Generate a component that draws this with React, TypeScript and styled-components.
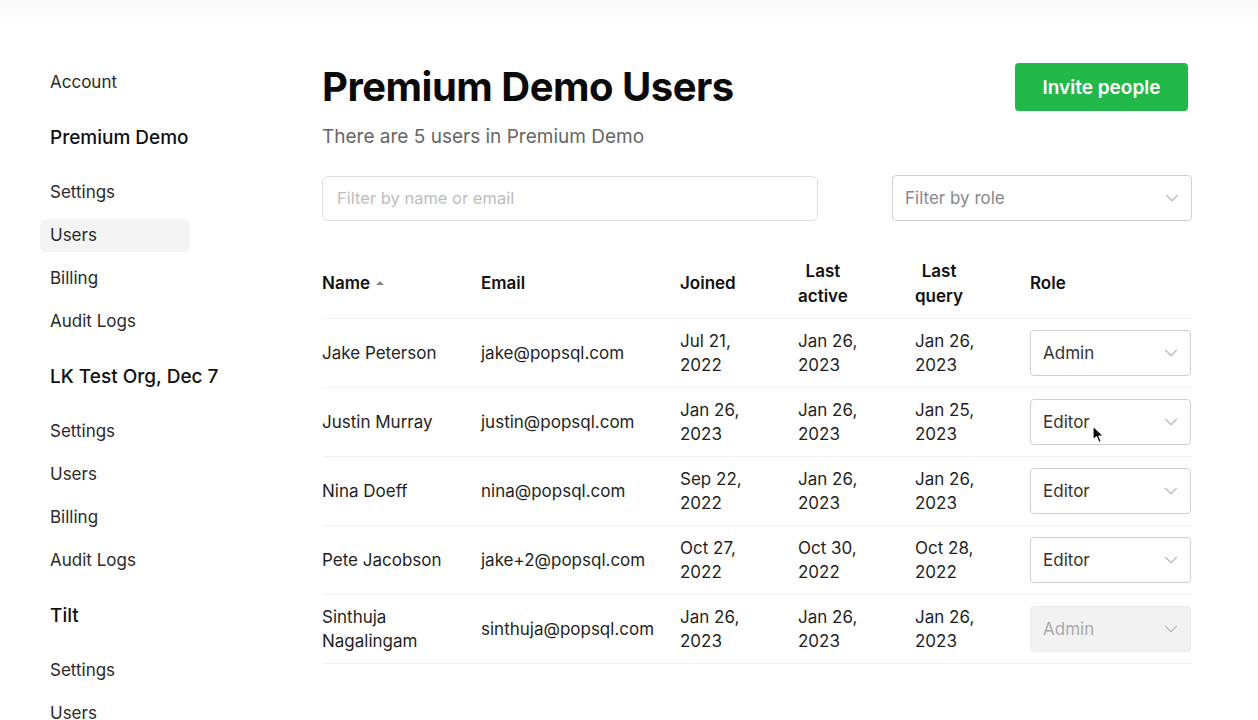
import React from "react";
import styled, { createGlobalStyle } from "styled-components";
import { ChevronDown } from "lucide-react";

const Global = createGlobalStyle`
  * { box-sizing: border-box; }
  html, body { margin: 0; padding: 0; }
  body {
    font-family: Inter, "Noto Sans", "Liberation Sans", sans-serif;
    color: #1f1f1f;
    background: linear-gradient(#fafafa 0px, #fafafa 14px, #ffffff 26px);
    -webkit-font-smoothing: antialiased;
  }
`;

const Page = styled.div`
  display: flex;
  width: 1258px;
  height: 720px;
  overflow: hidden;
  position: relative;
`;

const Sidebar = styled.nav`
  width: 322px;
  flex-shrink: 0;
  padding: 66px 0 0 40px;
  display: flex;
  flex-direction: column;
  gap: 10px;
`;

const NavItem = styled.a<{ $active?: boolean }>`
  display: block;
  width: 150px;
  height: 33px;
  line-height: 33px;
  padding-left: 10px;
  font-size: 17px;
  color: #2a2a2a;
  border-radius: 6px;
  background: ${(p) => (p.$active ? "#f4f4f4" : "transparent")};
  text-decoration: none;
`;

const NavHeading = styled.div`
  height: 57px;
  line-height: 57px;
  padding-left: 10px;
  font-size: 19px;
  font-weight: 500;
  color: #111;
  white-space: nowrap;
`;

const Main = styled.main`
  width: 870px;
  padding-top: 63px;
  display: flex;
  flex-direction: column;
`;

const HeaderRow = styled.div`
  display: flex;
  justify-content: space-between;
  align-items: flex-start;
`;

const Title = styled.h1`
  margin: 0;
  font-size: 40px;
  line-height: 48px;
  font-weight: 700;
  letter-spacing: -0.5px;
  color: #0a0a0a;
`;

const InviteButton = styled.button`
  margin-right: 4px;
  width: 173px;
  height: 48px;
  border: none;
  border-radius: 4px;
  background: #22b94a;
  color: #fff;
  font-family: inherit;
  font-size: 19px;
  font-weight: 600;
  cursor: pointer;
`;

const Subtitle = styled.p`
  margin: 14px 0 0;
  font-size: 19px;
  line-height: 24px;
  color: #666;
`;

const FilterRow = styled.div`
  margin-top: 26px;
  display: flex;
  justify-content: space-between;
  align-items: center;
`;

const SearchInput = styled.input`
  width: 496px;
  height: 45px;
  border: 1px solid #dedede;
  border-radius: 6px;
  padding: 0 14px;
  font-family: inherit;
  font-size: 16.5px;
  color: #222;
  outline: none;
  &::placeholder { color: #bdbdbd; }
`;

const SelectBox = styled.div<{ $width: number; $disabled?: boolean }>`
  width: ${(p) => p.$width}px;
  height: 46px;
  border: 1px solid ${(p) => (p.$disabled ? "#ececec" : "#cfcfcf")};
  border-radius: 4px;
  background: ${(p) => (p.$disabled ? "#f2f2f2" : "#fff")};
  display: flex;
  align-items: center;
  justify-content: space-between;
  padding: 0 8px 0 12px;
  font-size: 17px;
  color: ${(p) => (p.$disabled ? "#aaa" : "#333")};
`;

const Placeholder = styled.span`
  color: #888;
`;

const Table = styled.div`
  margin-top: 28px;
  display: flex;
  flex-direction: column;
`;

const Row = styled.div<{ $head?: boolean }>`
  display: grid;
  grid-template-columns: 159px 199px 118px 117px 115px 162px;
  align-items: center;
  height: ${(p) => (p.$head ? "70px" : "69px")};
  border-bottom: 1px solid #f1f1f1;
`;

const HeadCell = styled.div`
  font-size: 17px;
  font-weight: 600;
  color: #111;
  line-height: 25px;
  display: flex;
  align-items: center;
  gap: 6px;
`;

const Stacked = styled.span`
  display: inline-block;
  text-align: center;
`;

const Cell = styled.div`
  font-size: 17px;
  line-height: 24px;
  color: #1f1f1f;
`;

const SortArrow = styled.span`
  width: 0;
  height: 0;
  border-left: 4px solid transparent;
  border-right: 4px solid transparent;
  border-bottom: 4px solid #888;
  margin-top: -2px;
`;

const Cursor = styled.svg`
  position: absolute;
  left: 1092px;
  top: 425px;
  pointer-events: none;
`;

type User = {
  name: React.ReactNode;
  email: string;
  joined: [string, string];
  active: [string, string];
  query: [string, string];
  role: string;
  disabled?: boolean;
};

const users: User[] = [
  { name: "Jake Peterson", email: "jake@popsql.com", joined: ["Jul 21,", "2022"], active: ["Jan 26,", "2023"], query: ["Jan 26,", "2023"], role: "Admin" },
  { name: "Justin Murray", email: "justin@popsql.com", joined: ["Jan 26,", "2023"], active: ["Jan 26,", "2023"], query: ["Jan 25,", "2023"], role: "Editor" },
  { name: "Nina Doeff", email: "nina@popsql.com", joined: ["Sep 22,", "2022"], active: ["Jan 26,", "2023"], query: ["Jan 26,", "2023"], role: "Editor" },
  { name: "Pete Jacobson", email: "jake+2@popsql.com", joined: ["Oct 27,", "2022"], active: ["Oct 30,", "2022"], query: ["Oct 28,", "2022"], role: "Editor" },
  { name: <>Sinthuja<br />Nagalingam</>, email: "sinthuja@popsql.com", joined: ["Jan 26,", "2023"], active: ["Jan 26,", "2023"], query: ["Jan 26,", "2023"], role: "Admin", disabled: true },
];

const Two = ({ v }: { v: [string, string] }) => (
  <Cell>
    {v[0]}
    <br />
    {v[1]}
  </Cell>
);

const Chevron = () => <ChevronDown size={22} strokeWidth={1.2} color="#b8b8b8" />;

export default function App() {
  return (
    <>
      <Global />
      <Page>
        <Sidebar>
          <NavItem>Account</NavItem>
          <NavHeading>Premium Demo</NavHeading>
          <NavItem>Settings</NavItem>
          <NavItem $active>Users</NavItem>
          <NavItem>Billing</NavItem>
          <NavItem>Audit Logs</NavItem>
          <NavHeading>LK Test Org, Dec 7</NavHeading>
          <NavItem>Settings</NavItem>
          <NavItem>Users</NavItem>
          <NavItem>Billing</NavItem>
          <NavItem>Audit Logs</NavItem>
          <NavHeading>Tilt</NavHeading>
          <NavItem>Settings</NavItem>
          <NavItem>Users</NavItem>
        </Sidebar>
        <Main>
          <HeaderRow>
            <Title>Premium Demo Users</Title>
            <InviteButton>Invite people</InviteButton>
          </HeaderRow>
          <Subtitle>There are 5 users in Premium Demo</Subtitle>
          <FilterRow>
            <SearchInput placeholder="Filter by name or email" />
            <SelectBox $width={300}>
              <Placeholder>Filter by role</Placeholder>
              <Chevron />
            </SelectBox>
          </FilterRow>
          <Table>
            <Row $head>
              <HeadCell>
                Name <SortArrow />
              </HeadCell>
              <HeadCell>Email</HeadCell>
              <HeadCell>Joined</HeadCell>
              <HeadCell>
                <Stacked>Last<br />active</Stacked>
              </HeadCell>
              <HeadCell>
                <Stacked>Last<br />query</Stacked>
              </HeadCell>
              <HeadCell>Role</HeadCell>
            </Row>
            {users.map((u, i) => (
              <Row key={i}>
                <Cell>{u.name}</Cell>
                <Cell>{u.email}</Cell>
                <Two v={u.joined} />
                <Two v={u.active} />
                <Two v={u.query} />
                <SelectBox $width={161} $disabled={u.disabled}>
                  <span>{u.role}</span>
                  <Chevron />
                </SelectBox>
              </Row>
            ))}
          </Table>
        </Main>
        <Cursor width="14" height="20" viewBox="0 0 14 20">
          <path d="M1 1 L1 15 L4.5 11.8 L7 17.5 L9.3 16.5 L6.9 11 L11.5 11 Z" fill="#000" stroke="#fff" strokeWidth="1.2" strokeLinejoin="round" />
        </Cursor>
      </Page>
    </>
  );
}
